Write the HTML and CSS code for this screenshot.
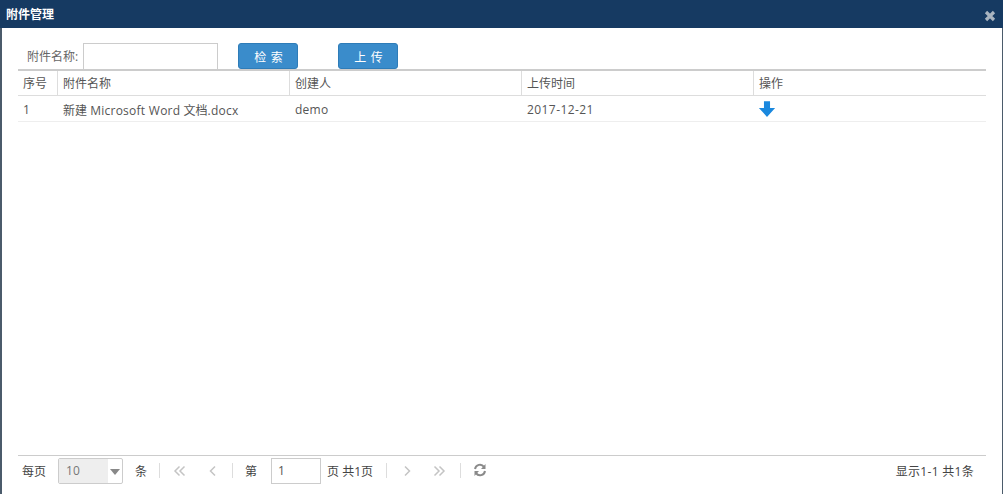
FILE: index.html
```html
<!DOCTYPE html>
<html lang="zh">
<head>
<meta charset="utf-8">
<title>附件管理</title>
<link rel="stylesheet" href="styles.css">
</head>
<body>
<div class="dialog">
  <header class="titlebar">
    <span class="title">附件管理</span>
    <svg class="close" width="12" height="12" viewBox="0 0 12 12"><path d="M2 2L10 10M10 2L2 10" stroke="#a9b4c0" stroke-width="3.2"/></svg>
  </header>
  <div class="content">
    <form class="toolbar">
      <label class="field-label">附件名称:</label>
      <input class="field-input" type="text">
      <button class="btn btn-search" type="button">检 索</button>
      <button class="btn btn-upload" type="button">上 传</button>
    </form>
    <div class="table">
      <div class="row head">
        <div class="cell c1">序号</div>
        <div class="cell c2">附件名称</div>
        <div class="cell c3">创建人</div>
        <div class="cell c4">上传时间</div>
        <div class="cell c5">操作</div>
      </div>
      <div class="row body-row">
        <div class="cell c1">1</div>
        <div class="cell c2"><span>新建 <span class="name-latin">Microsoft Word</span> 文档<span class="name-latin">.docx</span></span></div>
        <div class="cell c3"><span class="demo">demo</span></div>
        <div class="cell c4"><span class="latin">2017-12-21</span></div>
        <div class="cell c5">
          <svg class="download" width="18" height="18" viewBox="0 0 16 16"><path d="M5.3 1H10.7V7H15.2L8 15L0.8 7H5.3Z" fill="#1a88de"/></svg>
        </div>
      </div>
    </div>
    <footer class="pager">
      <span class="pg-text">每页</span>
      <span class="select"><span class="select-value">10</span><span class="select-arrow"></span></span>
      <span class="pg-text tiao">条</span>
      <span class="sep"></span>
      <svg class="pg-icon first" width="14" height="12" viewBox="0 0 14 12"><path d="M6.5 1.5L2 6L6.5 10.500M11.500 1.500L7 6L11.500 10.500" fill="none" stroke="#c4c4c4" stroke-width="1.500"/></svg>
      <svg class="pg-icon prev" width="10" height="12" viewBox="0 0 10 12"><path d="M7 1.500L2.500 6L7 10.500" fill="none" stroke="#c4c4c4" stroke-width="1.500"/></svg>
      <span class="sep"></span>
      <span class="pg-text di">第</span>
      <input class="page-input" type="text" value="1">
      <span class="pg-text total">页 共1页</span>
      <span class="sep"></span>
      <svg class="pg-icon next" width="10" height="12" viewBox="0 0 10 12"><path d="M3 1.500L7.500 6L3 10.500" fill="none" stroke="#c4c4c4" stroke-width="1.500"/></svg>
      <svg class="pg-icon last" width="14" height="12" viewBox="0 0 14 12"><path d="M2.500 1.500L7 6L2.500 10.500M7.500 1.500L12 6L7.500 10.500" fill="none" stroke="#c4c4c4" stroke-width="1.500"/></svg>
      <span class="sep"></span>
      <svg class="pg-icon refresh" width="14" height="14" viewBox="0 0 14 14"><path d="M2 6A5 5 0 0 1 11 3.800M12 8A5 5 0 0 1 3 10.200" fill="none" stroke="#8a8a8a" stroke-width="2"/><path d="M12.500 1V6H8ZM1.500 13V8H6Z" fill="#8a8a8a"/></svg>
      <span class="summary">显示1-1 共1条</span>
    </footer>
  </div>
</div>
</body>
</html>
```
FILE: styles.css
```css
* { box-sizing: border-box; }
html, body { margin: 0; padding: 0; background: #fff; }
body { width: 1003px; height: 494px; overflow: hidden; font-family: "Open Sans", "Noto Sans CJK SC", sans-serif; font-size: 12px; color: #555; }
.dialog { display: flex; flex-direction: column; height: 494px; background: #4b5b6b; padding: 0 1px 0 2px; }
.titlebar { display: flex; align-items: center; justify-content: space-between; height: 28px; margin: 0 -1px 0 -2px; padding: 0 7px 0 6px; background: #163a62; flex: none; }
.title { color: #fff; font-weight: 700; font-size: 12px; font-family: "Noto Sans CJK SC", sans-serif; padding-bottom: 1px; }
.close { margin-top: 3px; }
.content { flex: 1; display: flex; flex-direction: column; background: #fff; padding: 0 16px; min-height: 0; }
.toolbar { display: flex; align-items: center; height: 41px; padding: 15px 0 0 9px; flex: none; }
.field-label { width: 56px; white-space: nowrap; font-size: 12px; color: #666; }
.field-input { width: 135px; height: 27px; margin: 0; border: 1px solid #ccc; background: #fff; padding: 0 4px; }
.btn { width: 60px; height: 26px; border: 1px solid #2e7cb8; border-radius: 3px; background: #3a8ccb; color: #fff; font: 12px "Noto Sans CJK SC", sans-serif; letter-spacing: 1px; padding: 0 0 0 2px; }
.btn-search { margin-left: 20px; }
.btn-upload { margin-left: 40px; }
.table { flex: 1; border-top: 2px solid #ccc; min-height: 0; }
.row { display: grid; grid-template-columns: 39px 232px 232px 232px 233px; }
.head { height: 25px; border-bottom: 1px solid #ddd; }
.body-row { height: 26px; border-bottom: 1px solid #eee; padding-top: 2px; }
.cell { display: flex; align-items: center; padding-left: 5px; white-space: nowrap; color: #555; }
.head .cell { border-left: 1px solid #ddd; }
.head .c1 { border-left: 0; }
.body-row .cell { padding-left: 6px; }
.body-row .c1 { padding-left: 5px; }
.body-row .c5 { padding-left: 5px; margin-top: -2px; }
.latin { letter-spacing: 0.42px; }
.name-latin { letter-spacing: 0.26px; }
.demo { letter-spacing: 0.25px; }
.pager { display: flex; align-items: center; height: 30px; margin-bottom: 9px; border-top: 1px solid #ccc; padding: 0 12px 0 4px; flex: none; color: #444; }
.pg-text { white-space: nowrap; }
.select { display: flex; width: 65px; height: 26px; margin-left: 12px; border: 1px solid #ccc; border-radius: 2px; }
.select-value { width: 49px; background: #eee; padding-left: 7px; line-height: 24px; color: #777; }
.select-arrow { width: 0; height: 0; margin: 10px 0 0 2px; border: 5px solid transparent; border-top: 6px solid #888; border-bottom: 0; }
.tiao { margin-left: 12px; }
.sep { width: 1px; height: 15px; background: #ddd; }
.tiao + .sep { margin-left: 12px; }
.pg-icon { flex: none; }
.first { margin-left: 13px; }
.prev { margin-left: 21px; }
.prev + .sep { margin-left: 14px; }
.di { margin-left: 12px; }
.page-input { width: 50px; height: 26px; margin: 0 0 0 14px; border: 1px solid #ccc; padding: 0 6px; font: 12px "Open Sans", sans-serif; color: #555; }
.total { margin-left: 6px; }
.total + .sep { margin-left: 13px; }
.next { margin-left: 15px; }
.last { margin-left: 20px; }
.last + .sep { margin-left: 14px; }
.refresh { margin-left: 12px; margin-top: -2px; }
.summary { margin-left: auto; white-space: nowrap; letter-spacing: 0.3px; }
```
